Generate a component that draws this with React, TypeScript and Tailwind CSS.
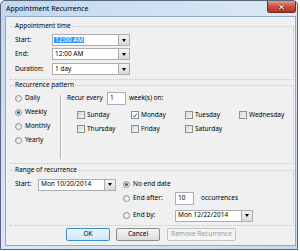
import React from 'react';

const DAYS = [
  ['Sunday', false],
  ['Monday', true],
  ['Tuesday', false],
  ['Wednesday', false],
  ['Thursday', false],
  ['Friday', false],
  ['Saturday', false],
] as const;

function Combo({ value, selected }: { value: string; selected?: boolean }) {
  return (
    <div className="flex h-[12px] w-[78px] border border-[#abadb3] bg-white">
      <div className="flex flex-1 items-center pl-[1px]">
        <span className={selected ? 'bg-[#3399ff] px-[1px] text-white' : 'px-[1px]'}>{value}</span>
      </div>
      <div className="flex w-[11px] items-center justify-center border-l border-[#acacac] bg-gradient-to-b from-[#f4f4f4] to-[#d9d9d9]">
        <div className="h-0 w-0 border-x-[2.5px] border-t-[3px] border-x-transparent border-t-black" />
      </div>
    </div>
  );
}

function TextBox({ value }: { value: string }) {
  return (
    <div className="flex h-[13px] w-[19px] items-center border border-[#abadb3] bg-white pl-[2px]">{value}</div>
  );
}

function Radio({ on }: { on?: boolean }) {
  return (
    <span className="flex h-[7px] w-[7px] shrink-0 items-center justify-center rounded-full border border-[#8c8c8c] bg-gradient-to-br from-[#dcdcdc] to-white">
      {on && <span className="h-[3px] w-[3px] rounded-full bg-[#1d5d9b]" />}
    </span>
  );
}

function Check({ on }: { on?: boolean }) {
  return (
    <span
      className={`flex h-[8px] w-[8px] shrink-0 items-center justify-center border border-[#8e8f8f] ${
        on ? 'bg-white' : 'bg-gradient-to-br from-[#d8d8d8] to-[#f6f6f6]'
      }`}
    >
      {on && (
        <svg viewBox="0 0 8 8" className="h-[7px] w-[7px]">
          <path d="M1.2 4.2 L3 6.2 L6.8 1.2" stroke="#23406b" strokeWidth="1.1" fill="none" />
        </svg>
      )}
    </span>
  );
}

function GroupHead({ title }: { title: string }) {
  return (
    <div className="flex h-[8px]">
      <div className="h-[4px] w-[4px] self-end border-t border-dotted border-[#c6c6c6]" />
      <span className="self-center px-[1px] leading-none">{title}</span>
      <div className="h-[4px] flex-1 self-end border-t border-r border-dotted border-[#c6c6c6]" />
    </div>
  );
}

function Button({ label, primary, disabled, w }: { label: string; primary?: boolean; disabled?: boolean; w: string }) {
  return (
    <div
      className={`flex h-[13px] items-center justify-center rounded-[2px] border ${w} ${
        primary
          ? 'border-[#3d8fd1] bg-gradient-to-b from-[#eaf5fd] to-[#d3e9f8]'
          : disabled
            ? 'border-[#bfc3c6] bg-[#f4f4f4] text-[#9a9a9a]'
            : 'border-[#8a8a8a] bg-gradient-to-b from-[#f5f5f5] to-[#dcdcdc]'
      }`}
    >
      {label}
    </div>
  );
}

export default function App() {
  return (
    <div className="h-[251px] w-[300px] bg-white font-['Noto_Sans',Arial,sans-serif] text-[6.5px] leading-none text-black">
      <div className="flex h-[250px] w-[298px] flex-col rounded-t-[5px] border border-[#59667a] bg-gradient-to-br from-[#c2d7ee] via-[#dbe8f6] to-[#c6daef]">
        {/* title bar */}
        <div className="flex h-[15px] items-center justify-between pl-[5px]">
          <span className="text-[7px]">Appointment Recurrence</span>
          <div className="mr-[1px] flex h-[12px] w-[29px] items-center justify-center self-start rounded-b-[3px] border border-t-0 border-[#7a271d] bg-gradient-to-b from-[#e49b8a] via-[#c8503f] to-[#b1321f]">
            <svg viewBox="0 0 8 7" className="h-[6px] w-[7px]">
              <path d="M1.5 1 L6.5 6 M6.5 1 L1.5 6" stroke="#4a1510" strokeWidth="2.4" />
              <path d="M1.5 1 L6.5 6 M6.5 1 L1.5 6" stroke="#ffffff" strokeWidth="1.2" />
            </svg>
          </div>
        </div>

        {/* frame */}
        <div className="flex flex-1 pr-[3px] pb-[3px] pl-[4px]">
          <div className="flex flex-1 flex-col border border-[#93a9c3] bg-[#f0f0f0] pt-[5px] pr-[1px] pl-[4px]">
            {/* Appointment time */}
            <GroupHead title="Appointment time" />
            <div className="border-r border-b border-dotted border-[#c6c6c6] pb-[4px]">
              {[
                ['Start:', '12:00 AM', true, 'mt-[4px]'],
                ['End:', '12:00 AM', false, 'mt-[2px]'],
                ['Duration:', '1 day', false, 'mt-[3px]'],
              ].map(([label, value, sel, mt]) => (
                <div key={label as string} className={`flex h-[12px] items-center pl-[5px] ${mt}`}>
                  <span className="w-[37px]">{label}</span>
                  <Combo value={value as string} selected={sel as boolean} />
                </div>
              ))}
            </div>

            {/* Recurrence pattern */}
            <div className="mt-[1px]">
              <GroupHead title="Recurrence pattern" />
            </div>
            <div className="flex h-[75px] border-r border-b border-dotted border-[#c6c6c6]">
              <div className="flex w-[50px] flex-col pt-[2px] pl-[5px]">
                {['Daily', 'Weekly', 'Monthly', 'Yearly'].map((t) => (
                  <div key={t} className="flex h-[14px] items-center gap-[3px]">
                    <Radio on={t === 'Weekly'} />
                    <span>{t}</span>
                  </div>
                ))}
              </div>
              <div className="mt-[6px] mb-[4px] w-[2px] border-l border-[#b0b0b0] bg-white" />
              <div className="flex flex-1 flex-col">
                <div className="mt-[3px] flex h-[13px] items-center pl-[5px]">
                  <span className="w-[40px]">Recur every</span>
                  <TextBox value="1" />
                  <span className="ml-[3px]">week(s) on:</span>
                </div>
                <div className="mt-[3px] grid grid-cols-[54px_54px_54px_54px] pl-[15px]">
                  {DAYS.map(([d, on]) => (
                    <div key={d} className="flex h-[14px] items-center gap-[2px]">
                      <Check on={on} />
                      <span>{d}</span>
                    </div>
                  ))}
                </div>
              </div>
            </div>

            {/* Range of recurrence */}
            <div className="mt-[2px]">
              <GroupHead title="Range of recurrence" />
            </div>
            <div className="flex border-r border-b border-dotted border-[#c6c6c6] pb-[3px]">
              <div className="flex pt-[4px] pl-[5px]">
                <div className="flex h-[13px] items-center">
                  <span className="w-[23px]">Start:</span>
                  <Combo value="Mon 10/20/2014" />
                </div>
              </div>
              <div className="ml-[7px] flex flex-col pt-[4px]">
                <div className="flex h-[13px] items-center gap-[3px]">
                  <Radio on />
                  <span>No end date</span>
                </div>
                <div className="mt-[1px] flex h-[13px] items-center gap-[3px]">
                  <Radio />
                  <span className="w-[39px]">End after:</span>
                  <TextBox value="10" />
                  <span className="ml-[4px]">occurrences</span>
                </div>
                <div className="mt-[4px] flex h-[13px] items-center gap-[3px]">
                  <Radio />
                  <span className="w-[39px]">End by:</span>
                  <Combo value="Mon 12/22/2014" />
                </div>
              </div>
            </div>

            {/* buttons */}
            <div className="mt-[2px] flex pl-[56px]">
              <Button label="OK" primary w="w-[44px]" />
              <div className="ml-[6px]">
                <Button label="Cancel" w="w-[44px]" />
              </div>
              <div className="ml-[7px]">
                <Button label="Remove Recurrence" disabled w="w-[69px]" />
              </div>
            </div>
          </div>
        </div>
      </div>
    </div>
  );
}
